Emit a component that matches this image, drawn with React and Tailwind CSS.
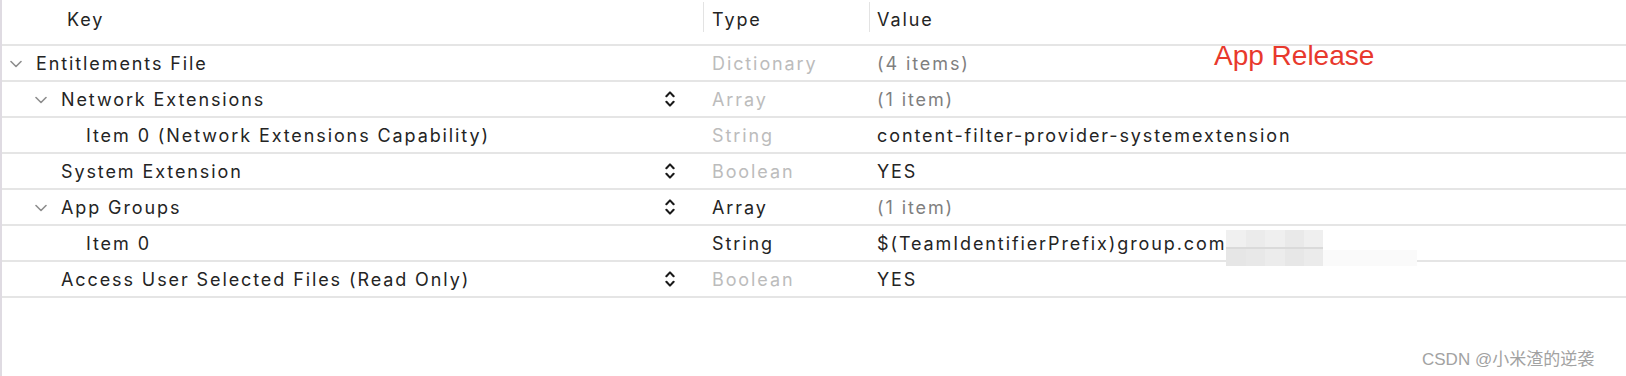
import React from "react";

const rows = [
  { key: "Entitlements File", level: 0, open: true, type: "Dictionary", typeDim: true, value: "(4 items)", valueDim: true },
  { key: "Network Extensions", level: 1, open: true, stepper: true, type: "Array", typeDim: true, value: "(1 item)", valueDim: true },
  { key: "Item 0 (Network Extensions Capability)", level: 2, type: "String", typeDim: true, value: "content-filter-provider-systemextension" },
  { key: "System Extension", level: 1, stepper: true, type: "Boolean", typeDim: true, value: "YES" },
  { key: "App Groups", level: 1, open: true, stepper: true, type: "Array", value: "(1 item)", valueDim: true },
  { key: "Item 0", level: 2, type: "String", value: "$(TeamIdentifierPrefix)group.com", redacted: true },
  { key: "Access User Selected Files (Read Only)", level: 1, stepper: true, type: "Boolean", typeDim: true, value: "YES" },
];

function Disclosure() {
  return (
    <svg width="12" height="8" viewBox="0 0 12 8" className="mt-[2px]">
      <path d="M1 1.5 L6 6.5 L11 1.5" fill="none" stroke="#8e8e8e" strokeWidth="1.6" strokeLinecap="round" strokeLinejoin="round" />
    </svg>
  );
}

function Stepper() {
  return (
    <svg width="10" height="18" viewBox="0 0 10 18">
      <path d="M1.4 6.2 L5 2.4 L8.6 6.2" fill="none" stroke="#1a1a1a" strokeWidth="2.1" strokeLinecap="round" strokeLinejoin="round" />
      <path d="M1.4 11.8 L5 15.6 L8.6 11.8" fill="none" stroke="#1a1a1a" strokeWidth="2.1" strokeLinecap="round" strokeLinejoin="round" />
    </svg>
  );
}

function Redaction() {
  return (
    <span className="absolute left-full top-[-3px] flex items-start">
      <span className="grid grid-cols-5 w-[97px]">
        <span className="h-[17px] bg-[#f0f0f0]" />
        <span className="h-[17px] bg-[#ebebeb]" />
        <span className="h-[17px] bg-[#efefef]" />
        <span className="h-[17px] bg-[#e9e9e9]" />
        <span className="h-[17px] bg-[#efefef]" />
        <span className="h-[19px] bg-[#e6e6e6] border-t-2 border-[#dadada]" />
        <span className="h-[19px] bg-[#e8e8e8] border-t-2 border-[#dadada]" />
        <span className="h-[19px] bg-[#ececec] border-t-2 border-[#dadada]" />
        <span className="h-[19px] bg-[#e7e7e7] border-t-2 border-[#dadada]" />
        <span className="h-[19px] bg-[#ebebeb] border-t-2 border-[#dadada]" />
      </span>
      <span className="mt-[20px] h-[16px] w-[94px] bg-[#fafafa]" />
    </span>
  );
}

const indent = ["w-[8px]", "w-[33px]", "w-[58px]"];

export default function App() {
  return (
    <div
      className="relative w-[1626px] h-[376px] bg-white border-l-2 border-[#dfdbe2] overflow-hidden text-[18px] text-[#242424]"
      style={{ fontFamily: "Inter, 'Noto Sans', sans-serif" }}
    >
      <div className="tracking-[1.9px]">
        <div className="grid grid-cols-[701px_166px_1fr] h-[46px] border-b-2 border-[#e5e5e5] items-center">
          <div className="pl-[65px] pb-[6px]">Key</div>
          <div className="flex items-center h-full">
            <div className="w-px h-[30px] bg-[#e3e3e3] mb-[10px]" />
            <span className="pl-[8px] pb-[6px]">Type</span>
          </div>
          <div className="flex items-center h-full">
            <div className="w-px h-[30px] bg-[#e3e3e3] mb-[10px]" />
            <span className="pl-[7px] pb-[6px]">Value</span>
          </div>
        </div>

        {rows.map((r) => (
          <div
            key={r.key + r.level}
            className="grid grid-cols-[701px_166px_1fr] h-[36px] border-b-2 border-[#e5e5e5] items-center"
          >
            <div className="flex items-center">
              <div className={indent[r.level]} />
              <div className="w-[26px] flex justify-start">{r.open && <Disclosure />}</div>
              <span className="flex-1 whitespace-nowrap">{r.key}</span>
              <div className="w-[10px] mr-[28px] flex">{r.stepper && <Stepper />}</div>
            </div>
            <div className={`pl-[9px] ${r.typeDim ? "text-[#bcbcbc]" : "text-[#242424]"}`}>{r.type}</div>
            <div className={`pl-[8px] whitespace-nowrap ${r.valueDim ? "text-[#7f7f7f]" : "text-[#242424]"}`}>
              <span className="relative">
                {r.value}
                {r.redacted && <Redaction />}
              </span>
            </div>
          </div>
        ))}
      </div>

      <div
        className="absolute left-[1212px] top-[35px] text-[28px] tracking-normal text-[#e8392d]"
        style={{ fontFamily: "'Liberation Sans', Arial, sans-serif" }}
      >
        App Release
      </div>

      <div
        className="absolute left-[1420px] top-[347px] text-[17px] tracking-normal text-[#a2a2a2] whitespace-nowrap"
        style={{ fontFamily: "'Liberation Sans', 'Noto Sans CJK SC', sans-serif" }}
      >
        CSDN @小米渣的逆袭
      </div>
    </div>
  );
}
